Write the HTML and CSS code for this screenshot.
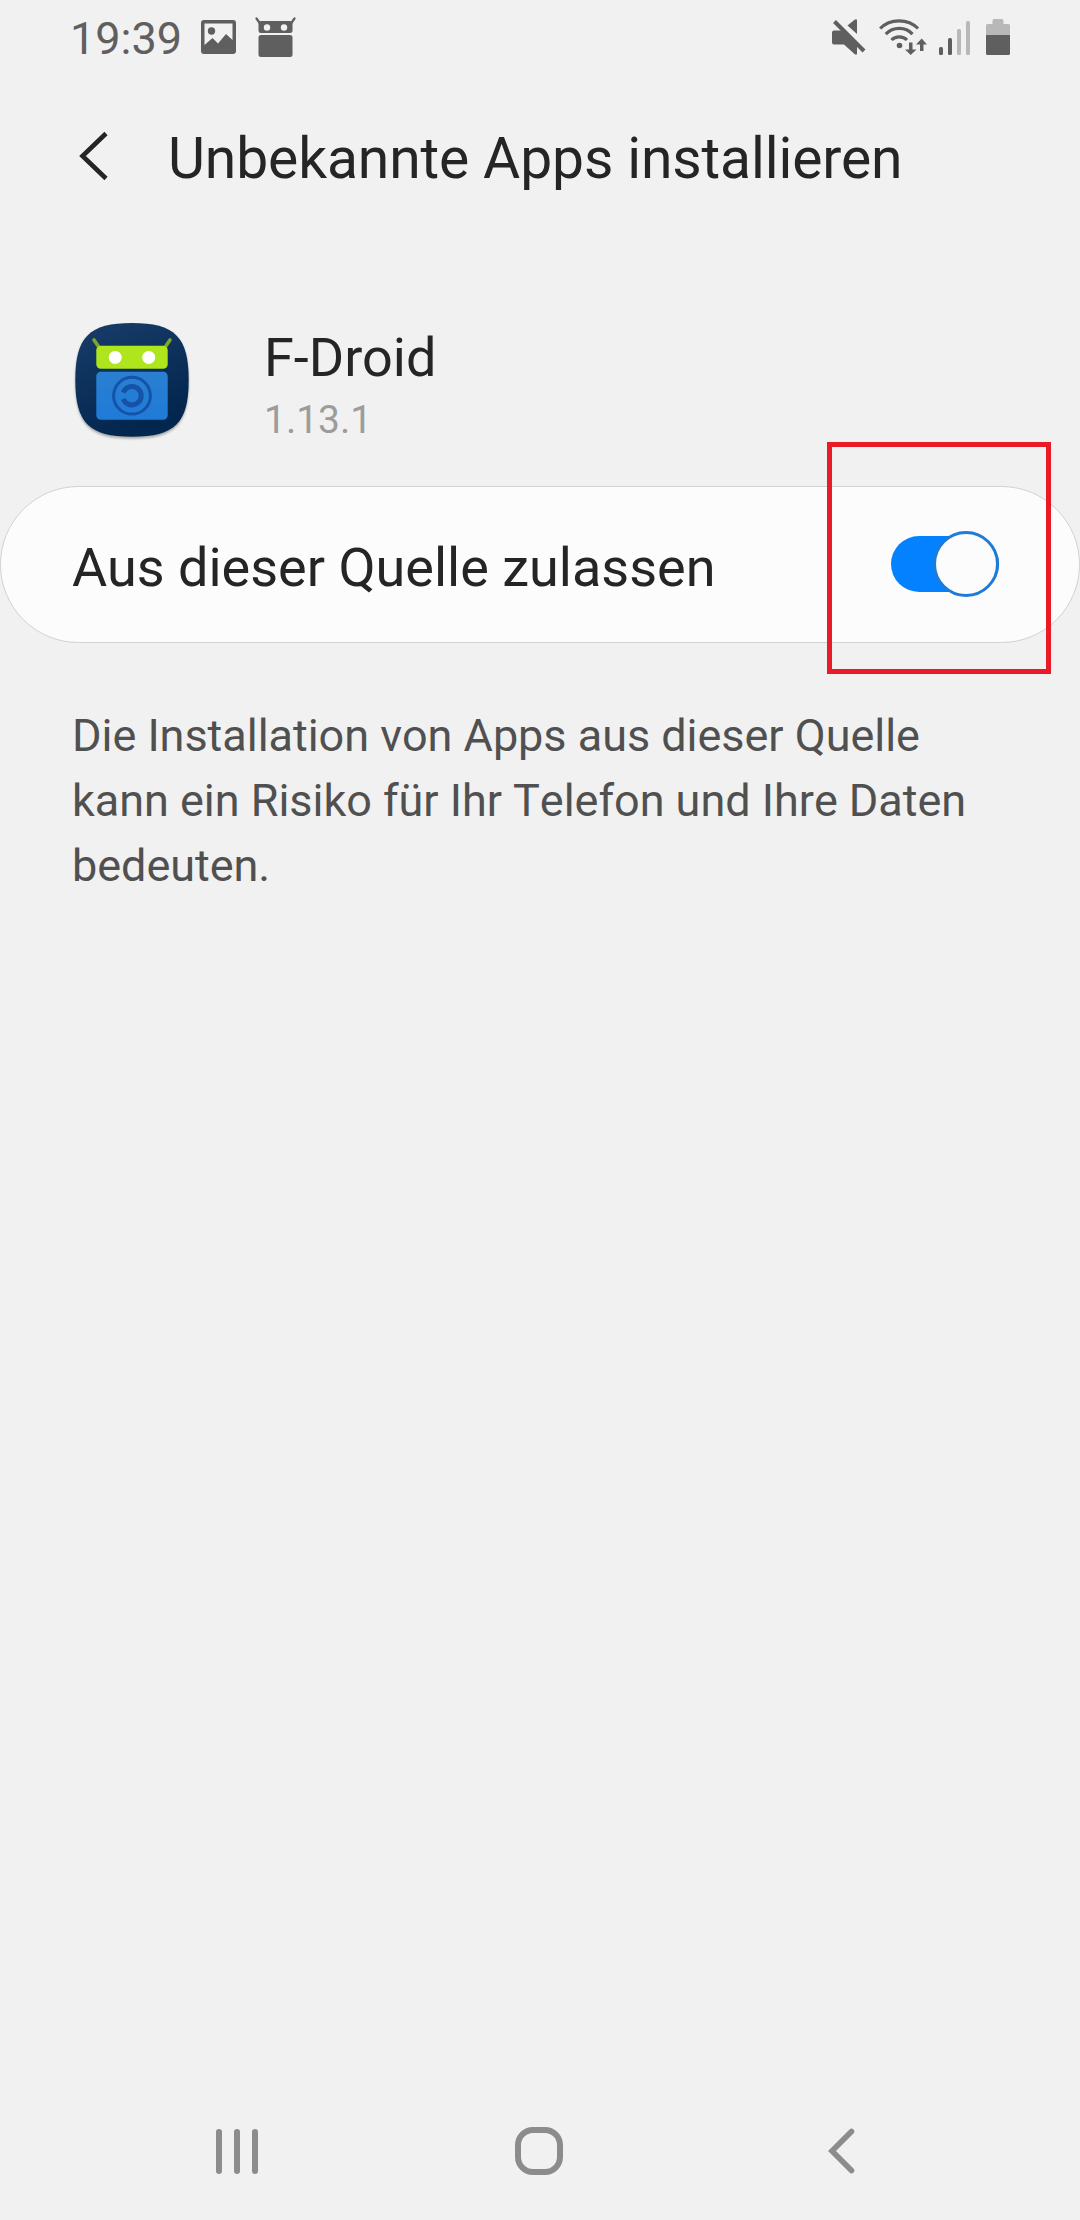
FILE: index.html
```html
<!DOCTYPE html>
<html lang="de">
<head>
  <meta charset="UTF-8">
  <meta name="viewport" content="width=device-width, initial-scale=1.0">
  <title>Unbekannte Apps installieren</title>
  <link rel="stylesheet" href="styles.css">
</head>
<body>
  <div class="screen">
    <div class="status-bar">
      <span class="clock">19:39</span>
      <svg class="icon-picture" width="35" height="34" viewBox="0 0 35 34">
        <path fill-rule="evenodd" d="M3 0H32a3 3 0 0 1 3 3V31a3 3 0 0 1-3 3H3a3 3 0 0 1-3-3V3a3 3 0 0 1 3-3ZM3.500 3.500V25L11.500 18L17 23.500L25 14L31.500 20V3.500Z"/>
        <circle cx="10.500" cy="11" r="3.700"/>
      </svg>
      <svg class="icon-droid" width="41" height="40" viewBox="0 0 41 40">
        <path d="M1.500 1.500L5 6.500M39.500 1.500L36 6.500" stroke="#5f5f5f" stroke-width="2.200" stroke-linecap="round"/>
        <rect x="3.500" y="4" width="34" height="12" rx="2.500"/>
        <rect x="3.500" y="18" width="34" height="22" rx="2.500"/>
        <circle cx="12" cy="10.500" r="3.200" fill="#f1f1f1"/>
        <circle cx="29" cy="10.500" r="3.200" fill="#f1f1f1"/>
      </svg>
      <div class="status-right">
        <svg class="icon-mute" width="34" height="36" viewBox="0 0 34 36">
          <path d="M2 11.500H11L25 25.500V34.500Q25 36.500 22.500 35L12 25.500H2a2 2 0 0 1-2-2V13.500a2 2 0 0 1 2-2Z"/>
          <path d="M15.500 6.500L22.500 0.700Q25 -0.500 25 1.500V15Z"/>
          <path d="M2.500 2.500L32 32" stroke="#5f5f5f" stroke-width="4"/>
        </svg>
        <svg class="icon-wifi" width="48" height="36" viewBox="0 0 48 36">
          <g fill="none" stroke="#5f5f5f" stroke-width="3.200">
            <path d="M1.200 9.500C11-0.800 29-0.800 39 9.500"/>
            <path d="M6.800 15.200C14 7.500 26.500 7.500 33.500 15.200"/>
            <path d="M12.500 21C16.500 16.800 24 16.800 28 21"/>
          </g>
          <circle cx="20.500" cy="26.500" r="2.800"/>
          <path d="M30 23.500H33.500V30.500H37.500L31.700 36L26 30.500H30ZM41 32H44.500V25.500H48L42.700 19.500L37 25.500H41Z"/>
        </svg>
        <svg class="icon-signal" width="32" height="34" viewBox="0 0 32 34">
          <rect x="0" y="26" width="4" height="8" rx="1.500"/>
          <rect x="9" y="17" width="4" height="17" rx="1.500"/>
          <rect class="dim" x="18" y="8" width="4" height="26" rx="1.500"/>
          <rect class="dim" x="27" y="0" width="4" height="34" rx="1.500"/>
        </svg>
        <svg class="icon-battery" width="24" height="36" viewBox="0 0 24 36">
          <path class="dim" d="M6.500 1.500a1.500 1.500 0 0 1 1.500-1.500H16a1.500 1.500 0 0 1 1.500 1.500V5H22.500a1.500 1.500 0 0 1 1.500 1.500V16H0V6.500A1.500 1.500 0 0 1 1.500 5H6.500Z"/>
          <path d="M0 16H24V34.500a1.500 1.500 0 0 1-1.500 1.500H1.500A1.500 1.500 0 0 1 0 34.500Z"/>
        </svg>
      </div>
    </div>

    <header class="header">
      <svg class="back" width="30" height="50" viewBox="0 0 30 50">
        <path d="M27 2.500L3.500 25L27 47.500" fill="none" stroke="#252525" stroke-width="4.600"/>
      </svg>
      <h1>Unbekannte Apps installieren</h1>
    </header>

    <section class="app">
      <svg class="app-icon" width="120" height="120" viewBox="0 0 120 120">
        <defs>
          <linearGradient id="bg" x1="0" y1="0" x2="0.400" y2="1">
            <stop offset="0" stop-color="#183d69"/>
            <stop offset="1" stop-color="#02264e"/>
          </linearGradient>
          <linearGradient id="box" x1="0" y1="0" x2="0" y2="1">
            <stop offset="0" stop-color="#2a7fd0"/>
            <stop offset="1" stop-color="#1f7bd9"/>
          </linearGradient>
        </defs>
        <path fill="url(#bg)" d="M60 3C103 3 116.700 17 116.700 60S103 116.700 60 116.700S3.300 103 3.300 60S17 3 60 3Z"/>
        <path d="M22 20L27.500 28M98 20L92.500 28" stroke="#7fa42a" stroke-width="3.600" stroke-linecap="round"/>
        <rect x="24.300" y="25.700" width="71.400" height="23" rx="4.500" fill="#aee51c"/>
        <circle cx="43.200" cy="37.400" r="6.500" fill="#fff"/>
        <circle cx="76.700" cy="37.400" r="6.500" fill="#fff"/>
        <rect x="24.300" y="51.700" width="71.400" height="48" rx="4.500" fill="url(#box)"/>
        <g fill="none" stroke="#1453a8">
          <circle cx="60" cy="75.700" r="18.400" stroke-width="3"/>
          <path d="M51.300 72.600A9.200 9.200 0 1 1 51.300 78.800" stroke-width="5"/>
        </g>
      </svg>
      <div class="app-text">
        <div class="app-name">F-Droid</div>
        <div class="app-version">1.13.1</div>
      </div>
    </section>

    <div class="option">
      <span class="option-label">Aus dieser Quelle zulassen</span>
      <div class="switch"><div class="thumb"></div></div>
      <div class="highlight"></div>
    </div>

    <p class="description">Die Installation von Apps aus dieser Quelle kann ein Risiko für Ihr Telefon und Ihre Daten bedeuten.</p>

    <nav class="nav-bar">
      <svg class="recents" width="42" height="45" viewBox="0 0 42 45">
        <rect x="0" y="0" width="6" height="45" rx="3"/>
        <rect x="18" y="0" width="6" height="45" rx="3"/>
        <rect x="36" y="0" width="6" height="45" rx="3"/>
      </svg>
      <div class="home"></div>
      <svg class="nav-back" width="28" height="46" viewBox="0 0 28 46">
        <path d="M23.500 3.500L4 23L23.500 42.500" fill="none" stroke="#8c8c8c" stroke-width="5.600" stroke-linecap="round"/>
      </svg>
    </nav>
  </div>
</body>
</html>
```
FILE: styles.css
```css
body {
  margin: 0;
  background: #f1f1f1;
  color: #252525;
  font-family: Roboto, sans-serif;
}

.screen {
  width: 1080px;
  height: 2220px;
  display: flex;
  flex-direction: column;
  overflow: hidden;
}

svg {
  display: block;
  flex-shrink: 0;
}

/* status bar */
.status-bar {
  height: 77px;
  display: flex;
  align-items: center;
  padding: 0 70px 0 70px;
  box-sizing: border-box;
  fill: #5f5f5f;
}

.clock {
  width: 131px;
  font-size: 45px;
  color: #5f5f5f;
}

.icon-picture {
  margin-right: 19px;
  margin-bottom: 3px;
}

.icon-droid {
  margin-bottom: 3px;
}

.status-right {
  display: flex;
  align-items: flex-end;
  margin-left: auto;
  margin-bottom: 3px;
}

.icon-wifi {
  margin-left: 13px;
}

.icon-signal {
  margin-left: 12px;
}

.icon-battery {
  margin-left: 15px;
}

.dim {
  fill: #b8b8b8;
}

/* title */
.header {
  height: 163px;
  display: flex;
  align-items: center;
  padding-left: 79px;
}

.back {
  margin-bottom: 5px;
}

.header h1 {
  margin: 0 0 0 59px;
  font-size: 57px;
  font-weight: 400;
  line-height: 68px;
  letter-spacing: -0.13px;
}

/* app info */
.app {
  height: 166px;
  display: flex;
  padding: 80px 72px 0;
  box-sizing: content-box;
}

.app-icon {
  filter: drop-shadow(0 2px 1px rgba(0, 0, 0, 0.3));
}

.app-text {
  margin-left: 72px;
  padding-top: 6px;
}

.app-name {
  font-size: 54px;
  line-height: 64px;
}

.app-version {
  margin-top: 7px;
  font-size: 39px;
  line-height: 47px;
  color: #9c9c9c;
}

/* switch row */
.option {
  position: relative;
  height: 157px;
  display: flex;
  align-items: center;
  justify-content: space-between;
  padding: 0 80px 0 71px;
  box-sizing: border-box;
  background: #fcfcfc;
  border: 1px solid #d2d2d2;
  border-radius: 79px;
}

.option-label {
  padding-top: 6px;
  font-size: 54px;
  line-height: 64px;
}

.switch {
  width: 108px;
  height: 56px;
  margin-bottom: 1px;
  display: flex;
  align-items: center;
  justify-content: flex-end;
  border-radius: 28px;
  background: #0381fe;
}

.thumb {
  width: 60px;
  height: 60px;
  flex-shrink: 0;
  border: 3px solid #1f7bd8;
  border-radius: 50%;
  background: #fcfcfc;
}

.highlight {
  position: absolute;
  left: 826px;
  top: -45px;
  width: 214px;
  height: 222px;
  border: 5px solid #e81c26;
}

.description {
  margin: 60px 72px 0;
  font-size: 45px;
  line-height: 65px;
  font-kerning: none;
  letter-spacing: -0.03px;
  color: #505050;
}

/* navigation bar */
.nav-bar {
  height: 138px;
  margin-top: auto;
  display: flex;
  align-items: center;
  padding-left: 216px;
  fill: #8c8c8c;
}

.home {
  width: 36px;
  height: 36px;
  margin-left: 257px;
  border: 6px solid #8c8c8c;
  border-radius: 18px;
}

.nav-back {
  margin-left: 265px;
}
```
